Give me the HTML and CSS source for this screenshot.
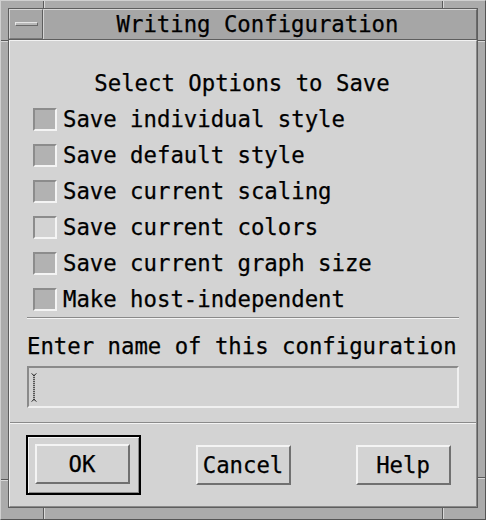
FILE: index.html
```html
<!DOCTYPE html>
<html>
<head>
<meta charset="utf-8">
<link rel="stylesheet" href="styles.css">
</head>
<body>
<div class="window">
  <span class="notch nv nt-left"></span>
  <span class="notch nv nt-right"></span>
  <span class="notch nv nb-left"></span>
  <span class="notch nv nb-right"></span>
  <span class="notch nh nl-top"></span>
  <span class="notch nh nr-top"></span>
  <span class="notch nh nl-bot"></span>
  <span class="notch nh nr-bot"></span>
  <div class="frame-inner">
    <div class="titlebar">
      <div class="menu-btn"><span class="menu-glyph"></span></div>
      <div class="title">Writing Configuration</div>
    </div>
    <div class="content">
      <div class="form">
        <div class="heading">Select Options to Save</div>
        <div class="row"><span class="check on"></span><span>Save individual style</span></div>
        <div class="row"><span class="check on"></span><span>Save default style</span></div>
        <div class="row"><span class="check on"></span><span>Save current scaling</span></div>
        <div class="row"><span class="check"></span><span>Save current colors</span></div>
        <div class="row"><span class="check on"></span><span>Save current graph size</span></div>
        <div class="row"><span class="check on"></span><span>Make host-independent</span></div>
        <div class="sep"></div>
        <div class="prompt">Enter name of this configuration</div>
        <div class="field">
          <svg class="ibeam" width="7" height="29" viewBox="0 0 7 29">
            <path d="M0.5 0.5 L3 2.5 L5.5 0.5 M0.5 28.5 L3 26.5 L5.5 28.5" stroke="#333" stroke-width="1" fill="none"/>
            <line x1="3" y1="2" x2="3" y2="27" stroke="#222" stroke-width="1.4" stroke-dasharray="1.2 0.8"/>
          </svg>
        </div>
      </div>
      <div class="sep-full"></div>
      <div class="actions">
        <div class="default-ring"><div class="btn">OK</div></div>
        <div class="btn">Cancel</div>
        <div class="btn">Help</div>
      </div>
    </div>
  </div>
</div>
</body>
</html>
```

FILE: styles.css
```css
* { box-sizing: border-box; }
html, body { margin: 0; padding: 0; }
body {
  background: #ababab;
  font-family: "DejaVu Sans Mono", "Liberation Mono", monospace;
  font-size: 22.3px;
  color: #000;
  -webkit-text-stroke: 0.25px #000;
}
.window {
  position: relative;
  width: 486px;
  height: 520px;
  background: #ababab;
  border: 1px solid;
  border-color: #d0d0d0 #555 #555 #d0d0d0;
  padding: 7px 7px 11px 7px;
}
.notch { position: absolute; background: #5a5a5a; }
.notch.nv { width: 1px; height: 7px; box-shadow: 1px 0 0 #d8d8d8; }
.notch.nh { height: 1px; width: 7px; box-shadow: 0 1px 0 #d8d8d8; }
.nt-left { left: 42px; top: 0; }
.nt-right { left: 441px; top: 0; }
.nb-left { left: 42px; bottom: 0; height: 11px !important; }
.nb-right { left: 441px; bottom: 0; height: 11px !important; }
.nl-top { left: 0; top: 39px; }
.nr-top { right: 0; top: 39px; }
.nl-bot { left: 0; top: 478px; }
.nr-bot { right: 0; top: 476px; }

.frame-inner {
  height: 100%;
  border: 1px solid #5e5e5e;
  display: flex;
  flex-direction: column;
}
.titlebar {
  height: 31px;
  display: flex;
  background: #a6a6a6;
  border-bottom: 1px solid #5e5e5e;
}
.menu-btn {
  width: 34px;
  border: 1px solid;
  border-color: #d6d6d6 #5e5e5e #7a7a7a #d6d6d6;
  display: flex;
  align-items: center;
  justify-content: center;
}
.menu-glyph {
  width: 23px;
  height: 4px;
  background: #b8b8b8;
  border-top: 1px solid #e6e6e6;
  border-bottom: 1px solid #6a6a6a;
  border-left: 1px solid #e6e6e6;
  border-right: 1px solid #6a6a6a;
}
.title {
  flex: 1;
  border-top: 1px solid #d6d6d6;
  border-left: 1px solid #d6d6d6;
  border-right: 1px solid #6a6a6a;
  display: flex;
  align-items: center;
  justify-content: center;
  line-height: 1;
  padding-bottom: 1px;
  padding-right: 5px;
}
.content {
  flex: 1;
  background: #d3d3d3;
  border: 1px solid;
  border-color: #f2f2f2 #8a8a8a #8a8a8a #f2f2f2;
  display: flex;
  flex-direction: column;
}
.form {
  padding: 24px 17px 14px 17px;
  display: flex;
  flex-direction: column;
}
.heading {
  height: 36px;
  line-height: 36px;
  text-align: center;
  padding-right: 2px;
}
.row {
  height: 36px;
  display: flex;
  align-items: center;
  gap: 6px;
  padding-left: 6px;
  white-space: pre;
}
.check {
  width: 24px;
  height: 23px;
  border: 2px solid;
  border-color: #8c8c8c #f4f4f4 #f4f4f4 #8c8c8c;
  background: #d3d3d3;
  flex: none;
}
.check.on { background: #b2b2b2; }
.sep {
  height: 2px;
  border-top: 1px solid #8a8a8a;
  border-bottom: 1px solid #f4f4f4;
}
.prompt {
  margin-top: 9px;
  height: 36px;
  line-height: 36px;
  white-space: pre;
}
.field {
  margin-top: 2px;
  height: 42px;
  border: 2px solid;
  border-color: #8a8a8a #f0f0f0 #f0f0f0 #8a8a8a;
  background: #d3d3d3;
  display: flex;
  align-items: center;
  padding-left: 2px;
}
.ibeam { display: block; }
.sep-full {
  height: 2px;
  border-top: 1px solid #8a8a8a;
  border-bottom: 1px solid #f4f4f4;
}
.actions {
  flex: 1;
  display: grid;
  grid-template-columns: 120px 120px 120px;
  column-gap: 40px;
  padding-left: 13px;
  align-items: center;
  justify-items: center;
}
.default-ring {
  width: 115px;
  height: 60px;
  border: 2px solid #000;
  padding: 7px;
  display: flex;
  box-shadow: inset 1px 1px 0 #f4f4f4, inset -1px -1px 0 #8a8a8a;
}
.btn {
  width: 95px;
  height: 40px;
  border: 2px solid;
  border-color: #f4f4f4 #707070 #707070 #f4f4f4;
  background: #d3d3d3;
  display: flex;
  align-items: center;
  justify-content: center;
  line-height: 1;
}
```
